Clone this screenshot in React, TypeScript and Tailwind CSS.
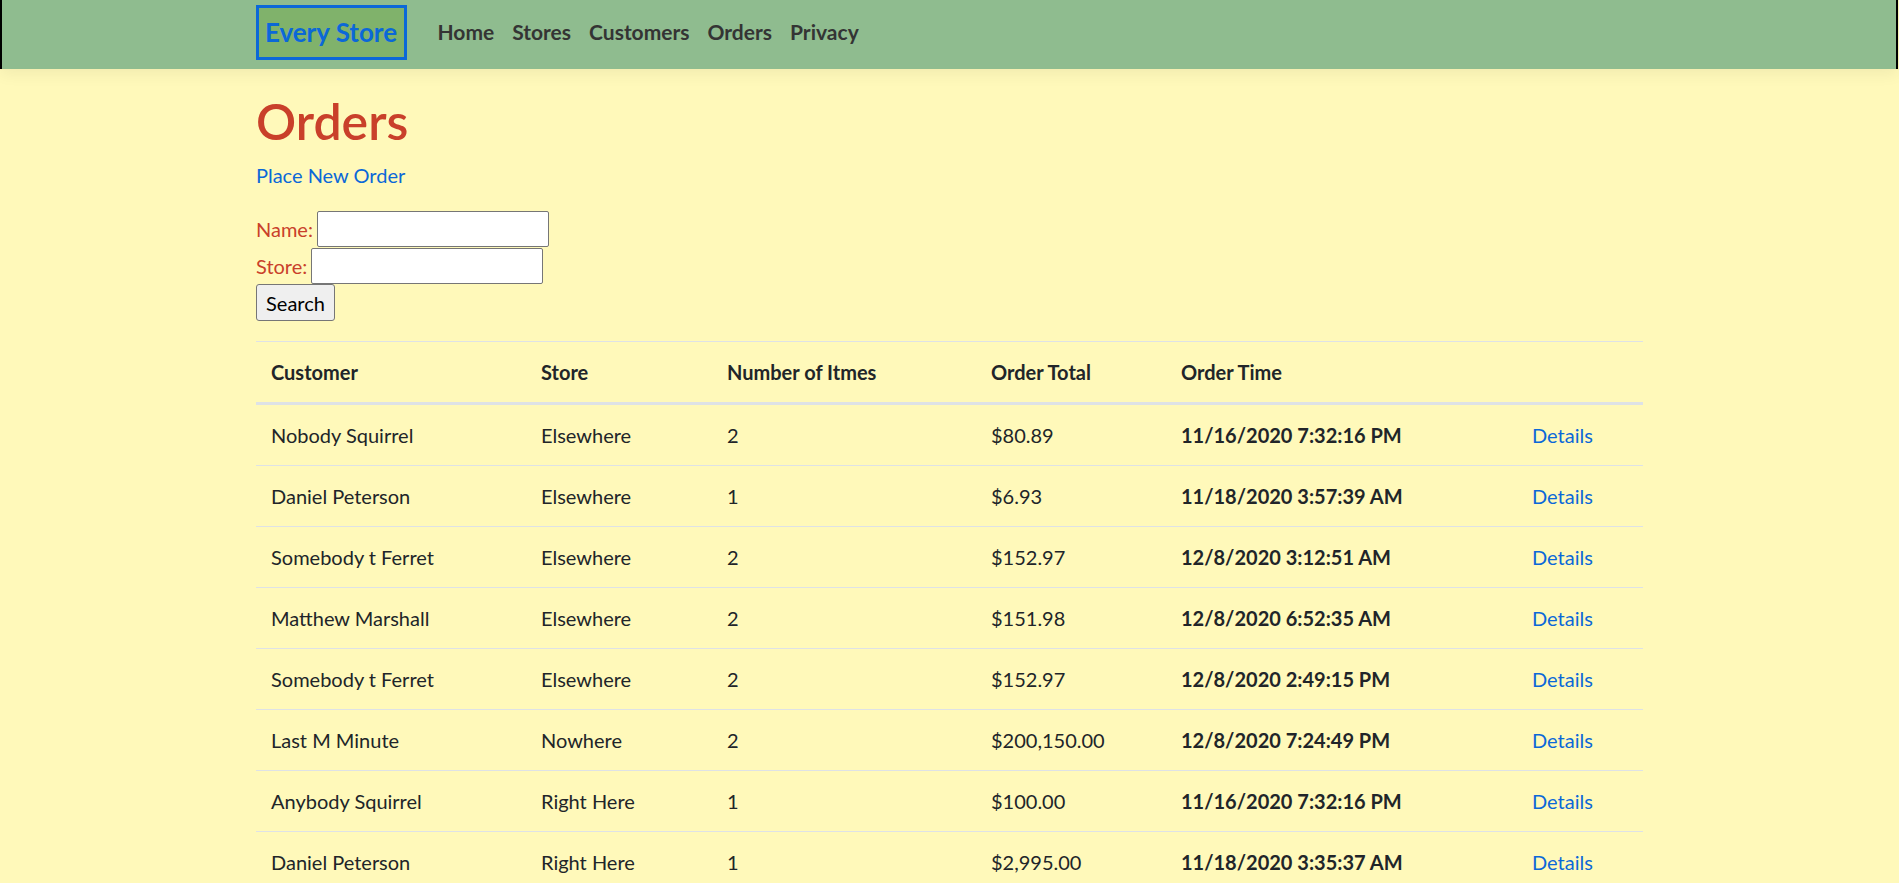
import React from "react";

type Order = {
  customer: string;
  store: string;
  items: number;
  total: string;
  time: string;
};

const orders: Order[] = [
  { customer: "Nobody Squirrel", store: "Elsewhere", items: 2, total: "$80.89", time: "11/16/2020 7:32:16 PM" },
  { customer: "Daniel Peterson", store: "Elsewhere", items: 1, total: "$6.93", time: "11/18/2020 3:57:39 AM" },
  { customer: "Somebody t Ferret", store: "Elsewhere", items: 2, total: "$152.97", time: "12/8/2020 3:12:51 AM" },
  { customer: "Matthew Marshall", store: "Elsewhere", items: 2, total: "$151.98", time: "12/8/2020 6:52:35 AM" },
  { customer: "Somebody t Ferret", store: "Elsewhere", items: 2, total: "$152.97", time: "12/8/2020 2:49:15 PM" },
  { customer: "Last M Minute", store: "Nowhere", items: 2, total: "$200,150.00", time: "12/8/2020 7:24:49 PM" },
  { customer: "Anybody Squirrel", store: "Right Here", items: 1, total: "$100.00", time: "11/16/2020 7:32:16 PM" },
  { customer: "Daniel Peterson", store: "Right Here", items: 1, total: "$2,995.00", time: "11/18/2020 3:35:37 AM" },
];

const navLinks = ["Home", "Stores", "Customers", "Orders", "Privacy"];

const App = () => {
  return (
    <div
      className="h-[883px] overflow-hidden bg-[#fff9ba] text-[20px] leading-[1.5] text-[#212529]"
      style={{ fontFamily: "Lato, 'Open Sans', sans-serif" }}
    >
      {/* Navbar */}
      <header className="relative z-10 h-[69px] mr-[1px] border-x-2 border-black bg-[#8fbc8f] shadow-[0_5px_15px_rgba(0,0,0,0.06)]">
        <div className="w-[1425px] mx-auto px-[19px] flex items-center h-[61px] pt-[3px]">
          <a className="flex items-center h-[55px] w-[151px] justify-center border-[3px] border-[#0b68d8] bg-[#80b26b] text-[26px] font-bold text-[#0b68d8]">
            Every Store
          </a>
          <nav className="flex items-center gap-[18px] ml-[31px] text-[21px] font-bold text-[#343434]">
            {navLinks.map((l) => (
              <a key={l}>{l}</a>
            ))}
          </nav>
        </div>
      </header>

      {/* Main content */}
      <main className="w-[1425px] mx-auto px-[19px] pt-[22px]">
        <h1 className="text-[50px] font-semibold leading-[1.2] text-[#c9402a] mb-[9px]">Orders</h1>
        <a className="block text-[#0b68d8] mb-[20px]">Place New Order</a>

        {/* Search form */}
        <form className="flex flex-col items-start mb-[20px]">
          <div className="flex items-center h-[37px]">
            <label className="text-[#c9402a] mr-[4px]">Name:</label>
            <input className="w-[232px] h-[36px] bg-white border border-[#767676] rounded-[2px]" type="text" />
          </div>
          <div className="flex items-center h-[37px]">
            <label className="text-[#c9402a] mr-[4px]">Store:</label>
            <input className="w-[232px] h-[36px] bg-white border border-[#767676] rounded-[2px]" type="text" />
          </div>
          <button
            type="button"
            className="h-[37px] w-[79px] bg-[#efefef] border border-[#767676] rounded-[3px] text-[20px] text-black leading-none"
          >
            Search
          </button>
        </form>

        {/* Orders table */}
        <table className="w-[1387px] table-fixed border-collapse text-left">
          <colgroup>
            <col className="w-[270px]" />
            <col className="w-[186px]" />
            <col className="w-[264px]" />
            <col className="w-[190px]" />
            <col className="w-[351px]" />
            <col className="w-[126px]" />
          </colgroup>
          <thead>
            <tr className="border-t border-[#dee2e6]">
              <th className="px-[15px] py-[15px] font-bold border-b-[3px] border-[#dee2e6]">Customer</th>
              <th className="px-[15px] py-[15px] font-bold border-b-[3px] border-[#dee2e6]">Store</th>
              <th className="px-[15px] py-[15px] font-bold border-b-[3px] border-[#dee2e6]">Number of Itmes</th>
              <th className="px-[15px] py-[15px] font-bold border-b-[3px] border-[#dee2e6]">Order Total</th>
              <th className="px-[15px] py-[15px] font-bold border-b-[3px] border-[#dee2e6]">Order Time</th>
              <th className="px-[15px] py-[15px] border-b-[3px] border-[#dee2e6]"></th>
            </tr>
          </thead>
          <tbody>
            {orders.map((o, i) => (
              <tr key={i} className="border-t border-[#dee2e6]">
                <td className="px-[15px] py-[15px]">{o.customer}</td>
                <td className="px-[15px] py-[15px]">{o.store}</td>
                <td className="px-[15px] py-[15px]">{o.items}</td>
                <td className="px-[15px] py-[15px]">{o.total}</td>
                <td className="px-[15px] py-[15px] font-bold">{o.time}</td>
                <td className="px-[15px] py-[15px]">
                  <a className="text-[#0b68d8]">Details</a>
                </td>
              </tr>
            ))}
          </tbody>
        </table>
      </main>
    </div>
  );
};

export default App;
